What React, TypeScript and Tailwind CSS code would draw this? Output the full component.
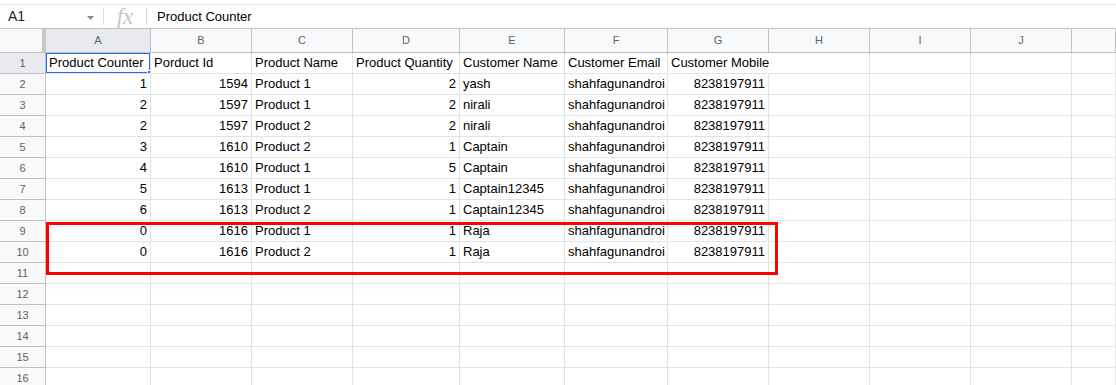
import React from "react";

const COLS = ["A", "B", "C", "D", "E", "F", "G", "H", "I", "J", ""];

type Cell = { v: string; right?: boolean };

const HEAD: Cell[] = [
  { v: "Product Counter" },
  { v: "Porduct Id" },
  { v: "Product Name" },
  { v: "Product Quantity" },
  { v: "Customer Name" },
  { v: "Customer Email" },
  { v: "Customer Mobile" },
];

const DATA: [string, string, string, string, string][] = [
  ["1", "1594", "Product 1", "2", "yash"],
  ["2", "1597", "Product 1", "2", "nirali"],
  ["2", "1597", "Product 2", "2", "nirali"],
  ["3", "1610", "Product 2", "1", "Captain"],
  ["4", "1610", "Product 1", "5", "Captain"],
  ["5", "1613", "Product 1", "1", "Captain12345"],
  ["6", "1613", "Product 2", "1", "Captain12345"],
  ["0", "1616", "Product 1", "1", "Raja"],
  ["0", "1616", "Product 2", "1", "Raja"],
];

const gridCols =
  "grid grid-cols-[46px_105px_101px_101px_107px_105px_103px_101px_101px_101px_101px_1fr]";

function rowCells(r: number): Cell[] {
  if (r === 1) return HEAD;
  const d = DATA[r - 2];
  if (!d) return [];
  return [
    { v: d[0], right: true },
    { v: d[1], right: true },
    { v: d[2] },
    { v: d[3], right: true },
    { v: d[4] },
    { v: "shahfagunandroi" },
    { v: "8238197911", right: true },
  ];
}

function Row({ r }: { r: number }) {
  const cells = rowCells(r);
  return (
    <div className={`${gridCols} h-[21px]`}>
      <div
        className={`flex items-center justify-center border-r border-b border-[#c0c0c0] text-[11px] text-[#5f6368] ${
          r === 1 ? "bg-[#e8eaed]" : "bg-[#f8f9fa]"
        }`}
      >
        {r}
      </div>
      {COLS.map((c, i) => {
        const cell = cells[i];
        const overflow = r === 1 && i === 6;
        return (
          <div
            key={c + i}
            className={`relative flex items-center border-b border-[#e2e3e3] text-[13px] text-black whitespace-nowrap ${
              overflow
                ? "overflow-visible z-10 border-r border-r-transparent pl-[3px]"
                : "overflow-hidden border-r border-r-[#e2e3e3] px-[3px]"
            } ${i === 5 ? "pr-0" : ""} ${cell?.right ? "justify-end" : "justify-start"}`}
          >
            {cell?.v}
            {r === 1 && i === 0 && (
              <>
                <span className="pointer-events-none absolute -left-px -top-px bottom-[-1px] right-[-1px] border-2 border-[#1a73e8]" />
                <span className="absolute right-[-4px] bottom-[-4px] z-20 h-[7px] w-[7px] border border-white bg-[#1a73e8]" />
              </>
            )}
          </div>
        );
      })}
    </div>
  );
}

export default function App() {
  const rows = Array.from({ length: 16 }, (_, i) => i + 1);
  return (
    <div
      className="relative h-[385px] w-[1116px] overflow-hidden bg-white"
      style={{ fontFamily: '"Liberation Sans", Arial, sans-serif' }}
    >
      <div className="h-[4px]" />
      {/* formula bar */}
      <div className="flex h-[24px] items-center border-t border-[#e0e0e0]">
        <div className="flex w-[103px] items-center justify-between pl-[8px] pr-[8px]">
          <span className="text-[14px] text-[#202124]">A1</span>
          <svg width="8" height="4" viewBox="0 0 8 4" className="mt-[2px]">
            <path d="M0 0h7L3.5 4z" fill="#80868b" />
          </svg>
        </div>
        <div className="h-[17px] w-px bg-[#dadce0]" />
        <div
          className="flex w-[42px] items-center justify-center text-[23px] italic leading-none text-[#c4c7c5]"
          style={{ fontFamily: '"Liberation Serif", "Times New Roman", serif' }}
        >
          fx
        </div>
        <div className="h-[17px] w-px bg-[#dadce0]" />
        <span className="pl-[10px] text-[13px] text-black">Product Counter</span>
      </div>

      {/* column headers */}
      <div className={`${gridCols} h-[25px] border-t border-b border-[#c0c0c0] bg-[#f8f9fa]`}>
        <div className="border-r-4 border-[#c4c7c5]" />
        {COLS.map((c, i) => (
          <div
            key={c + i}
            className={`flex items-center justify-center border-r border-[#c0c0c0] text-[11px] text-[#5f6368] ${
              i === 0 ? "bg-[#e8eaed]" : ""
            }`}
          >
            {c}
          </div>
        ))}
      </div>

      {rows.map((r) => (
        <Row key={r} r={r} />
      ))}

      {/* annotation */}
      <div className="pointer-events-none absolute left-[46px] top-[222px] h-[53px] w-[732px] border-[3px] border-[#ff0000]" />
    </div>
  );
}
